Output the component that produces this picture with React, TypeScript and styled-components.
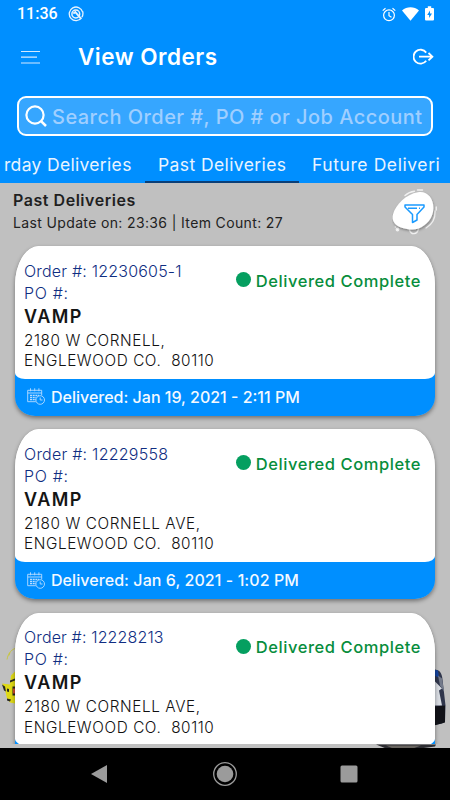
import React from "react";
import styled, { createGlobalStyle } from "styled-components";

const GlobalStyle = createGlobalStyle`
  *, *::before, *::after { box-sizing: border-box; }
  body { margin: 0; background: #c0c0c0; font-family: Inter, "Open Sans", sans-serif; }
`;

const Screen = styled.div`
  display: flex;
  flex-direction: column;
  width: 450px;
  height: 800px;
  overflow: hidden;
  background: #c0c0c0;
`;

const Header = styled.header`
  flex: none;
  height: 183px;
  background: #008fff;
  color: #fff;
`;

const StatusBar = styled.div`
  display: flex;
  align-items: center;
  height: 28px;
  padding: 0 16px 0 17px;
`;

const Clock = styled.span`
  width: 51px;
  font: 500 16px/28px Roboto, sans-serif;
`;

const StatusIcons = styled.div`
  display: flex;
  align-items: center;
  gap: 6px;
  margin-left: auto;
`;

const TitleBar = styled.div`
  display: flex;
  align-items: center;
  height: 58px;
  padding: 0 16px 0 21px;
`;

const Title = styled.h1`
  flex: 1;
  margin: 0 0 0 37px;
  font-size: 22.5px;
  font-weight: 600;
  line-height: 30px;
  letter-spacing: 0.5px;
`;

const SearchBox = styled.div`
  display: flex;
  align-items: center;
  width: 416px;
  height: 40px;
  margin: 10px 0 0 17px;
  padding-left: 6px;
  border: 2px solid #fff;
  border-radius: 9px;
  background: #36a6ff;
`;

const Placeholder = styled.span`
  margin-left: 5px;
  padding-top: 1px;
  color: #a0cfff;
  font-size: 20px;
  font-weight: 500;
  line-height: 24px;
  letter-spacing: 0.46px;
  white-space: nowrap;
`;

const Tabs = styled.nav`
  display: flex;
  height: 47px;
  padding: 0 10px 0 4px;
`;

const Tab = styled.span<{ $width: number; $indent: number; $spacing: number; $active?: boolean }>`
  width: ${(p) => p.$width}px;
  padding: 9px 0 0 ${(p) => p.$indent}px;
  border-bottom: ${(p) => (p.$active ? "2px solid #0a3f78" : "0")};
  color: #e9f4ff;
  font-size: 17.5px;
  line-height: 40px;
  letter-spacing: ${(p) => p.$spacing}px;
  white-space: nowrap;
`;

const Content = styled.main`
  position: relative;
  display: flex;
  flex-direction: column;
  flex: none;
  height: 564.5px;
  overflow: hidden;
`;

const Backdrop = styled.svg`
  position: absolute;
  left: 0;
  bottom: 0;
`;

const Summary = styled.section`
  display: flex;
  justify-content: space-between;
  flex: none;
  height: 56px;
  padding: 6px 12px 0 13px;
`;

const SummaryTitle = styled.h2`
  margin: 0;
  color: #1f1f1f;
  font-size: 16px;
  font-weight: 600;
  line-height: 23px;
  letter-spacing: 0.54px;
`;

const SummaryLine = styled.p`
  margin: 0;
  color: #222;
  font-size: 14px;
  line-height: 22px;
  letter-spacing: 0.36px;
`;

const List = styled.section`
  position: relative;
  height: 505px;
  padding: 7px 15px 0;
  display: flex;
  flex-direction: column;
  gap: 13.8px;
  overflow: hidden;
`;

const Card = styled.article`
  flex: none;
  height: 169.5px;
  border-radius: 24px 24px 20px 20px / 39px 39px 19px 19px;
  overflow: hidden;
  background: linear-gradient(#fff 110px, #008fff 110px);
  box-shadow: 0 2px 4px rgba(0, 0, 0, 0.42);
`;

const CardBody = styled.div`
  display: flex;
  justify-content: space-between;
  height: 132.8px;
  padding: 13.5px 14px 0 9px;
  border-radius: 24px 24px 10px 10px / 39px 39px 6px 6px;
  background: #fff;
`;

const Details = styled.div`
  display: flex;
  flex-direction: column;
  white-space: pre;
`;

const Reference = styled.span<{ $spacing: number }>`
  height: 22px;
  color: #102e82;
  font-size: 16px;
  font-weight: 300;
  line-height: 22px;
  letter-spacing: ${(p) => p.$spacing}px;
`;

const Customer = styled.strong`
  height: 26px;
  color: #151515;
  font-size: 18px;
  font-weight: 600;
  line-height: 26px;
  letter-spacing: 1.4px;
`;

const Address = styled.span`
  height: 20.5px;
  color: #111;
  font-size: 15.3px;
  font-weight: 300;
  line-height: 22px;
  letter-spacing: 0.6px;
`;

const Status = styled.div`
  display: flex;
  align-items: center;
  gap: 5px;
  height: 22px;
  margin-top: 10px;
  color: #078d3c;
  font-size: 16.5px;
  font-weight: 500;
  line-height: 22px;
  letter-spacing: 0.56px;
  white-space: nowrap;
`;

const Dot = styled.i`
  width: 15px;
  height: 15px;
  margin-top: -2px;
  border-radius: 50%;
  background: #059f60;
`;

const CardFooter = styled.footer<{ $spacing: number }>`
  display: flex;
  align-items: center;
  gap: 6px;
  height: 36px;
  padding-left: 12px;
  color: #f4f9ff;
  font-size: 16px;
  font-weight: 500;
  line-height: 22px;
  letter-spacing: ${(p) => p.$spacing}px;
`;

const NavBar = styled.footer`
  display: flex;
  align-items: center;
  justify-content: space-between;
  flex: 1;
  padding: 0 92px 0 90px;
  background: #000;
`;

const HomeButton = styled.svg`
  margin-left: 2px;
`;

const MenuIcon = () => (
  <svg width="20" height="16" viewBox="0 0 20 16" stroke="#d5e9ff" strokeWidth="1.2">
    <path d="M0 2.5h19M0 8.2h16M0 14h19" />
  </svg>
);

const LogoutIcon = () => (
  <svg width="21" height="18" viewBox="0 0 21 18" fill="none" stroke="#fff" strokeWidth="1.8">
    <path d="M13.2 4.600A7 7 0 1 0 13.2 12.800M6 8.700h13M15.500 5l3.900 3.700-3.900 3.700" />
  </svg>
);

const SearchIcon = () => (
  <svg width="22" height="22" viewBox="0 0 22 22" fill="none" stroke="#fff" strokeWidth="2.2">
    <circle cx="10" cy="10" r="8.6" />
    <path d="M15.8 15.8l5.2 5.2" strokeWidth="2.5" />
  </svg>
);

const SyncIcon = () => (
  <svg width="16" height="16" viewBox="0 0 16 16" fill="none" stroke="#e6f3ff">
    <path d="M13.6 11.8A6.8 6.8 0 1 1 14.6 6" strokeWidth="1.3" />
    <path d="M14.7 5.5c.5 2 .2 4-.8 5.6" strokeWidth="1.3" />
    <circle cx="7.8" cy="8" r="3.9" strokeWidth="1.5" />
    <path d="M5.3 7.5l2-1.4 5.5 6.2" strokeWidth="1.9" />
  </svg>
);

const AlarmIcon = () => (
  <svg width="14" height="15" viewBox="0 0 14 15" fill="none" stroke="#fff" strokeWidth="1.2">
    <circle cx="7" cy="8.3" r="5.4" />
    <path d="M7 5v3.7l2.5 1.6M.7 3.6l2.8-2.4M13.3 3.6l-2.8-2.4" />
  </svg>
);

const WifiIcon = () => (
  <svg width="17" height="15" viewBox="0 0 17 15" fill="#fff">
    <path d="M0 3.500C5-.8 12-.8 17 3.500L8.500 13.700z" />
  </svg>
);

const BatteryIcon = () => (
  <svg width="9" height="16" viewBox="0 0 9 16">
    <path d="M1 2h1.8V.3h3.4V2H8a1 1 0 0 1 1 1v10.5a1 1 0 0 1-1 1H1a1 1 0 0 1-1-1V3a1 1 0 0 1 1-1z" fill="#fff" />
    <path d="M5 4.5L2.2 9h1.9v3L7 7.6H5z" fill="#008fff" />
  </svg>
);

const FilterButton = () => (
  <svg width="46" height="48" viewBox="0 0 46 48" fill="none">
    <defs>
      <filter id="filterShadow" x="-20%" y="-20%" width="150%" height="150%">
        <feDropShadow dx="0.5" dy="1.5" stdDeviation="1.2" floodOpacity="0.35" />
      </filter>
    </defs>
    <g stroke="#f1f1f1" strokeWidth="1.4" strokeLinecap="round">
      <path d="M13 6.5C16 3.8 19 2.6 22.5 2.2M25.5 1h5" />
      <path d="M43 22c.3 8-3.3 13.7-9 17M44.2 18v3" />
      <path d="M17.500 41c1.500 5 7.500 5 9-1" />
      <circle cx="5.5" cy="40.5" r="1.2" fill="#fff" />
      <path d="M3.3 38h.2" />
    </g>
    <path
      d="M26 3.2c9-1.500 15.600 5.800 15.400 15.800C41.100 30 34 36.500 26.500 39.500c-5 2-11.500.8-16-.5C2.500 37-.5 31 1 25.500 3.500 15.500 14 5.200 26 3.200z"
      fill="#fff"
      filter="url(#filterShadow)"
    />
    <path
      d="M13 16h19v2l-7 7.500v5.500L20.500 33.500v-8L13 18zM16 19.300h9M27 19.300h1"
      stroke="#1b9bff"
      strokeWidth="1.5"
      strokeLinejoin="round"
    />
  </svg>
);

const CalendarIcon = () => (
  <svg width="18" height="17" viewBox="0 0 18 17" fill="none" stroke="#b9dcff" strokeWidth="0.9">
    <path d="M8.8 13.7H.7V2.300h14v5M.7 5h14M3.500.3v3M7.700.3v3M11.900.3v3" />
    <path d="M3 7.500h9M3 9.700h6M3 11.600h6" strokeWidth="1.3" strokeDasharray="2 .7" />
    <circle cx="13.2" cy="12" r="4.3" />
    <path d="M13.200 9.500V12h2.300" />
  </svg>
);

const BackdropArt = () => (
  <Backdrop width="450" height="120" viewBox="0 627.5 450 120">
    <path d="M7 659c1-5 3-9 8-11M9 655l1-3" stroke="#c9c727" strokeWidth=".8" fill="none" />
    <path d="M15 671l-4 4-1 9-8-1 3 6 2 9 3 4 5 1z" fill="#dfd916" />
    <path d="M2 684l3 2 1 5-2-1zM7 688l2 .500v3l-2-.500zM12.500 686h3v9h-3zM7 698l4 1-1 2-3-1zM10 680l5-2v2l-5 2z" fill="#29291f" />
    <path d="M13 688h3v5h-3z" fill="#d04c2b" />
    <path d="M434 669c6 0 8 4 8.500 10l3 26-.5 16-3 2-10 2z" fill="#30364c" />
    <path d="M434 669l4 1 1 7-5-2z" fill="#1645a0" />
    <path d="M434 680l8 8-3 2 3 15h-8z" fill="#d8dce2" />
    <path d="M438 675l4 3 2 13-4-6z" fill="#737a8a" />
    <path d="M434 706l11-1v17l-11 3z" fill="#111218" />
    <path d="M376 744h60l-1 2-15 2h-34z" fill="#2d2d32" />
    <path d="M386 745h35l-8 3h-20z" fill="#68645f" />
  </Backdrop>
);

const orders = [
  { id: "12230605-1", address: "2180 W CORNELL,", delivered: "Jan 19, 2021 - 2:11 PM", spacing: 0.2, footSpacing: 0 },
  { id: "12229558", address: "2180 W CORNELL AVE,", delivered: "Jan 6, 2021 - 1:02 PM", spacing: 0.24, footSpacing: 0.07 },
  { id: "12228213", address: "2180 W CORNELL AVE,", delivered: "", spacing: 0.14, footSpacing: 0 },
];

export default function App() {
  return (
    <>
      <GlobalStyle />
      <Screen>
        <Header>
          <StatusBar>
            <Clock>11:36</Clock>
            <SyncIcon />
            <StatusIcons>
              <AlarmIcon />
              <WifiIcon />
              <BatteryIcon />
            </StatusIcons>
          </StatusBar>
          <TitleBar>
            <MenuIcon />
            <Title>View Orders</Title>
            <LogoutIcon />
          </TitleBar>
          <SearchBox>
            <SearchIcon />
            <Placeholder>Search Order #, PO # or Job Account</Placeholder>
          </SearchBox>
          <Tabs>
            <Tab $width={141} $indent={0} $spacing={0.32}>rday Deliveries</Tab>
            <Tab $width={154} $indent={13} $spacing={0.4} $active>Past Deliveries</Tab>
            <Tab $width={141} $indent={13} $spacing={0.58}>Future Deliveri</Tab>
          </Tabs>
        </Header>
        <Content>
          <BackdropArt />
          <Summary>
            <div>
              <SummaryTitle>Past Deliveries</SummaryTitle>
              <SummaryLine>Last Update on: 23:36 | Item Count: 27</SummaryLine>
            </div>
            <FilterButton />
          </Summary>
          <List>
            {orders.map((order) => (
              <Card key={order.id}>
                <CardBody>
                  <Details>
                    <Reference $spacing={order.spacing}>Order #: {order.id}</Reference>
                    <Reference $spacing={0.66}>PO #:</Reference>
                    <Customer>VAMP</Customer>
                    <Address>{order.address}</Address>
                    <Address>{"ENGLEWOOD CO.  80110"}</Address>
                  </Details>
                  <Status>
                    <Dot />
                    Delivered Complete
                  </Status>
                </CardBody>
                {order.delivered && (
                  <CardFooter $spacing={order.footSpacing}>
                    <CalendarIcon />
                    Delivered: {order.delivered}
                  </CardFooter>
                )}
              </Card>
            ))}
          </List>
        </Content>
        <NavBar>
          <svg width="18" height="20" viewBox="0 0 18 20">
            <path d="M17 1v18L1 10z" fill="#9b9b9b" />
          </svg>
          <HomeButton width="26" height="26" viewBox="0 0 26 26">
            <circle cx="13" cy="13" r="11.3" fill="none" stroke="#9b9b9b" strokeWidth="1.3" />
            <circle cx="13" cy="13" r="8.3" fill="#9b9b9b" />
          </HomeButton>
          <svg width="18" height="18" viewBox="0 0 18 18">
            <rect x=".5" y=".5" width="17" height="17" rx="1.5" fill="#9b9b9b" />
          </svg>
        </NavBar>
      </Screen>
    </>
  );
}
